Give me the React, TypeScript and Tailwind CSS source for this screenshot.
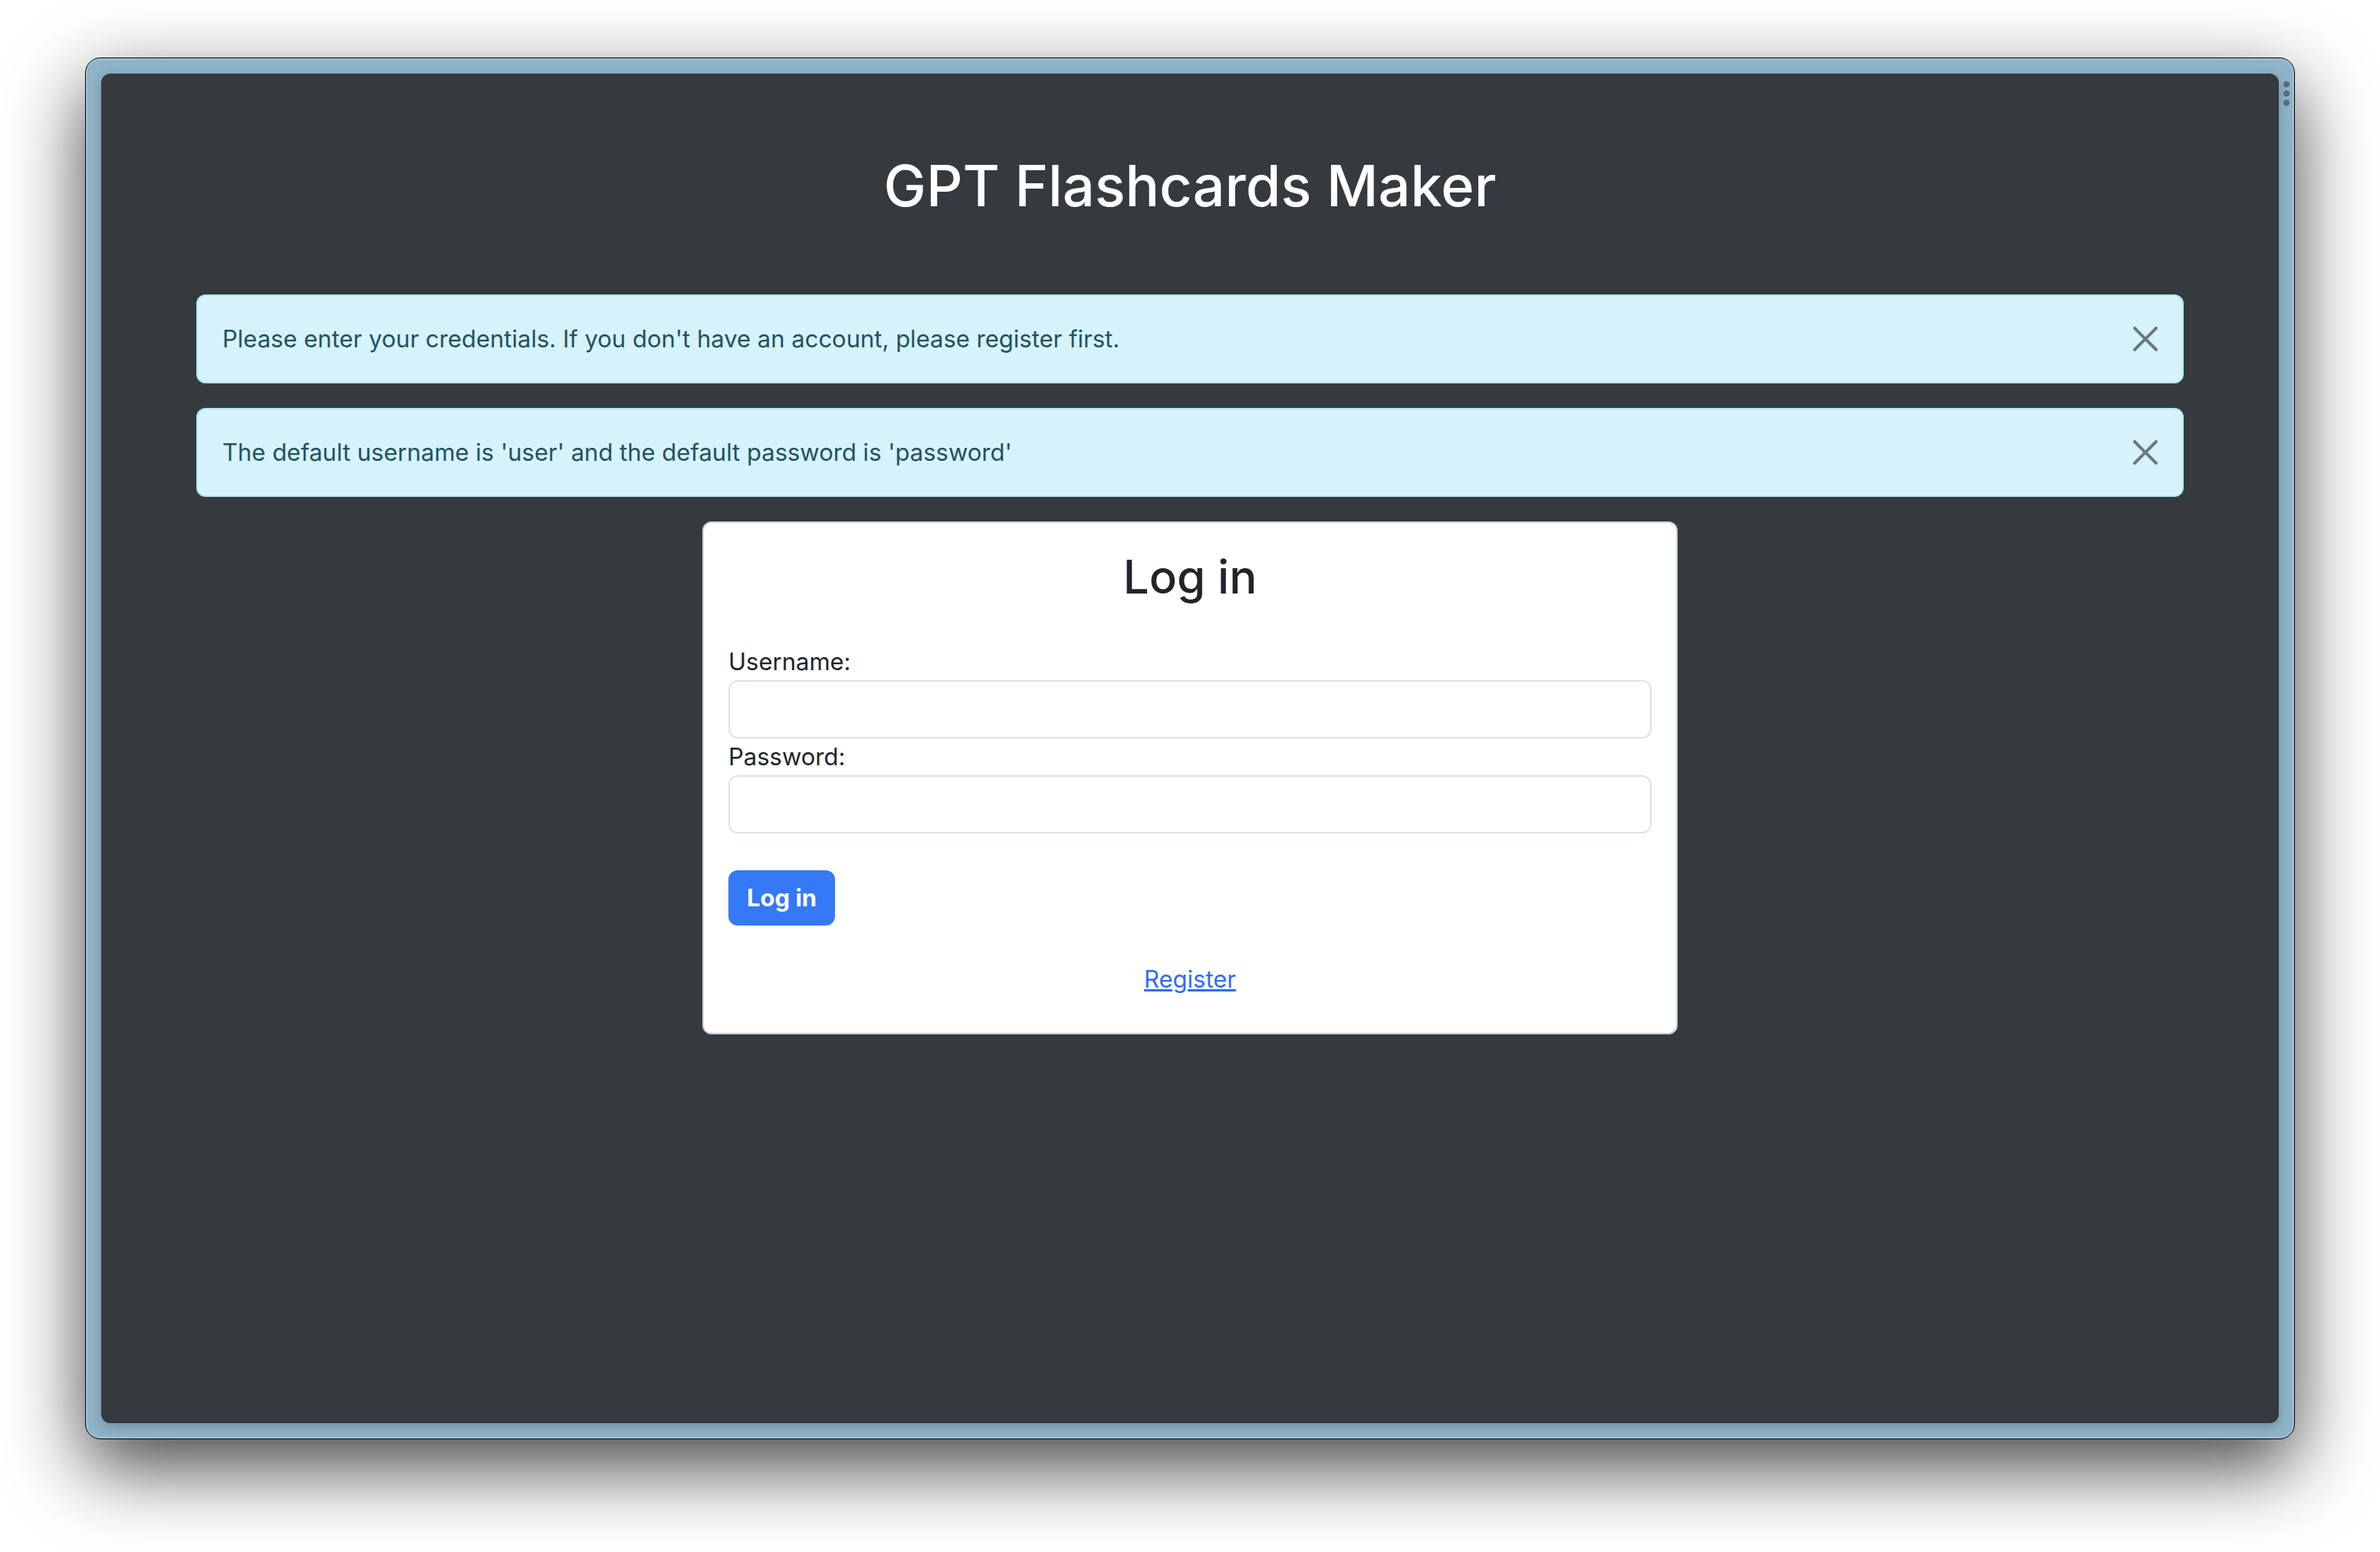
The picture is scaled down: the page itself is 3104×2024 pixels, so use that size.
import { useState } from 'react';
import type { ReactNode } from 'react';

function CloseIcon() {
  return (
    <svg viewBox="0 0 16 16" className="size-8" fill="currentColor" aria-hidden="true">
      <path d="M.293.293a1 1 0 0 1 1.414 0L8 6.586 14.293.293a1 1 0 1 1 1.414 1.414L9.414 8l6.293 6.293a1 1 0 0 1-1.414 1.414L8 9.414l-6.293 6.293a1 1 0 0 1-1.414-1.414L6.586 8 .293 1.707a1 1 0 0 1 0-1.414z" />
    </svg>
  );
}

function Alert({ children }: { children: ReactNode }) {
  const [open, setOpen] = useState(true);
  if (!open) return null;
  return (
    <div
      role="alert"
      className="mb-8 flex items-center justify-between rounded-xl border-2 border-[#aee8f8] bg-[#d6f3fb] p-8 text-[#235160]"
    >
      <p>{children}</p>
      <button type="button" aria-label="Close" onClick={() => setOpen(false)} className="text-[#6b797d]">
        <CloseIcon />
      </button>
    </div>
  );
}

function Field({ id, label, type }: { id: string; label: string; type: string }) {
  return (
    <div>
      <label htmlFor={id} className="block">
        {label}
      </label>
      <input
        id={id}
        name={id}
        type={type}
        className="block h-[76px] w-full rounded-xl border-2 border-[#dee2e6] bg-white px-6"
      />
    </div>
  );
}

export default function App() {
  return (
    <div className="flex min-h-screen flex-col bg-white px-[111px] pt-[75px] pb-[147px] font-['Inter',sans-serif] text-[31px] leading-[48px] text-[#212529]">
      <div className="relative flex flex-1 flex-col rounded-[20px] border border-black bg-[#8fb3c8] p-5 shadow-[inset_0_0_0_2px_#a5c3d5,0_36px_100px_rgba(0,0,0,0.74)]">
        <div className="absolute top-[30px] right-[6px] flex flex-col gap-1" aria-hidden="true">
          <span className="size-2 rounded-full bg-[#566e7b]" />
          <span className="size-2 rounded-full bg-[#566e7b]" />
          <span className="size-2 rounded-full bg-[#566e7b]" />
        </div>
        <main className="flex-1 rounded-xl bg-[#353a3e] px-6 shadow-[0_4px_16px_rgba(0,0,0,0.22)]">
          <div className="mx-auto max-w-[2592px]">
            <h1 className="pt-[98px] pb-[94px] text-center text-[74px] leading-[96px] font-medium text-white">
              GPT Flashcards Maker
            </h1>
            <Alert>Please enter your credentials. If you don't have an account, please register first.</Alert>
            <Alert>The default username is 'user' and the default password is 'password'</Alert>
            <section className="mx-auto max-w-[1272px] rounded-xl border-2 border-[#d0d1d2] bg-white px-8 pt-8 pb-[46px]">
              <h2 className="mb-12 text-center text-[60px] leading-[77px] font-medium">Log in</h2>
              <form onSubmit={(e) => e.preventDefault()}>
                <Field id="username" label="Username:" type="text" />
                <Field id="password" label="Password:" type="password" />
                <button
                  type="submit"
                  className="mt-12 block h-[72px] rounded-xl bg-[#3579f6] px-6 font-bold text-white"
                >
                  Log in
                </button>
              </form>
              <p className="mt-[46px] text-center">
                <a href="#register" className="text-[#2f6df6] underline">
                  Register
                </a>
              </p>
            </section>
          </div>
        </main>
      </div>
    </div>
  );
}
